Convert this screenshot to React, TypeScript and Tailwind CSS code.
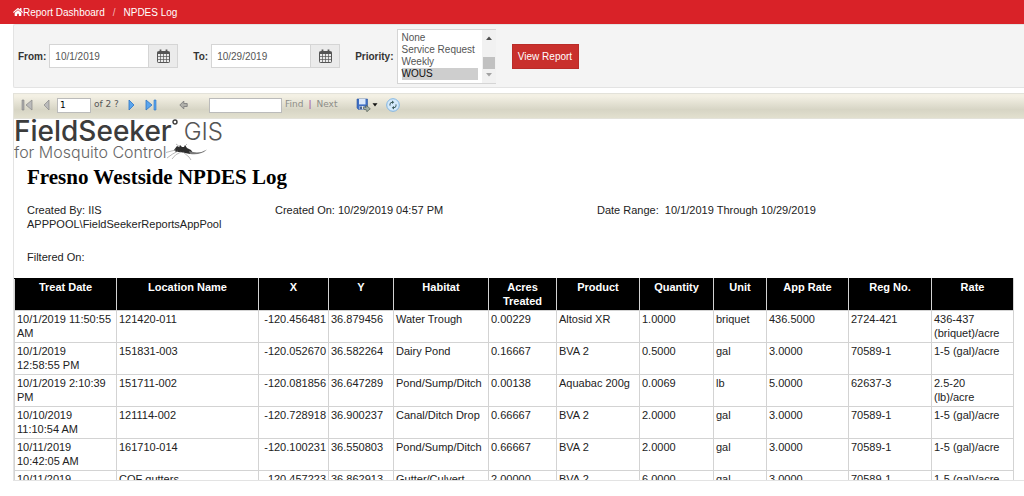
import React from 'react'
import { FaHome } from 'react-icons/fa'

interface Treatment {
    date: string
    location: string
    x: string
    y: string
    habitat: string
    acres: string
    product: string
    quantity: string
    unit: string
    appRate: string
    regNo: string
    rate: string
}

const columns = [
    { label: 'Treat Date', width: 'w-[102px]' },
    { label: 'Location Name', width: 'w-[142px]' },
    { label: 'X', width: 'w-[70px]' },
    { label: 'Y', width: 'w-[65px]' },
    { label: 'Habitat', width: 'w-[95px]' },
    { label: 'Acres Treated', width: 'w-[68px]' },
    { label: 'Product', width: 'w-[83px]' },
    { label: 'Quantity', width: 'w-[74px]' },
    { label: 'Unit', width: 'w-[53px]' },
    { label: 'App Rate', width: 'w-[82px]' },
    { label: 'Reg No.', width: 'w-[83px]' },
    { label: 'Rate', width: 'w-[82px]' },
]

const treatments: Treatment[] = [
    { date: '10/1/2019 11:50:55\nAM', location: '121420-011', x: '-120.456481', y: '36.879456', habitat: 'Water Trough', acres: '0.00229', product: 'Altosid XR', quantity: '1.0000', unit: 'briquet', appRate: '436.5000', regNo: '2724-421', rate: '436-437\n(briquet)/acre' },
    { date: '10/1/2019\n12:58:55 PM', location: '151831-003', x: '-120.052670', y: '36.582264', habitat: 'Dairy Pond', acres: '0.16667', product: 'BVA 2', quantity: '0.5000', unit: 'gal', appRate: '3.0000', regNo: '70589-1', rate: '1-5 (gal)/acre' },
    { date: '10/1/2019 2:10:39\nPM', location: '151711-002', x: '-120.081856', y: '36.647289', habitat: 'Pond/Sump/Ditch', acres: '0.00138', product: 'Aquabac 200g', quantity: '0.0069', unit: 'lb', appRate: '5.0000', regNo: '62637-3', rate: '2.5-20\n(lb)/acre' },
    { date: '10/10/2019\n11:10:54 AM', location: '121114-002', x: '-120.728918', y: '36.900237', habitat: 'Canal/Ditch Drop', acres: '0.66667', product: 'BVA 2', quantity: '2.0000', unit: 'gal', appRate: '3.0000', regNo: '70589-1', rate: '1-5 (gal)/acre' },
    { date: '10/11/2019\n10:42:05 AM', location: '161710-014', x: '-120.100231', y: '36.550803', habitat: 'Pond/Sump/Ditch', acres: '0.66667', product: 'BVA 2', quantity: '2.0000', unit: 'gal', appRate: '3.0000', regNo: '70589-1', rate: '1-5 (gal)/acre' },
    { date: '10/11/2019', location: 'COF gutters', x: '-120.457223', y: '36.862913', habitat: 'Gutter/Culvert', acres: '2.00000', product: 'BVA 2', quantity: '6.0000', unit: 'gal', appRate: '3.0000', regNo: '70589-1', rate: '1-5 (gal)/acre' },
]

const CalendarIcon = () => (
    <svg viewBox="0 0 13 14" className="w-[13px] h-[14px]" fill="none" stroke="#555" aria-hidden="true">
        <rect x="0.5" y="2.5" width="12" height="11" rx="0.8" />
        <path d="M0.5 3.5h12M0.5 4.5h12" />
        <path d="M3.5 5v8M6.5 5v8M9.5 5v8M1 7.5h11M1 10.5h11" strokeWidth="0.7" />
        <path d="M3.5 0.5v3M9.5 0.5v3" strokeWidth="1.8" />
    </svg>
)

const DateField: React.FC<{ id: string; label: string; value: string }> = ({ id, label, value }) => (
    <div className="flex items-center">
        <label htmlFor={id} className="font-bold text-[#333] mr-[3px]">{label}</label>
        <input id={id} type="text" defaultValue={value} className="w-[100px] h-6 px-[5px] border border-[#d5d5d5] bg-white text-[#555]" />
        <button type="button" aria-label={`Pick ${label}`} className="flex items-center justify-center w-[29px] h-6 border border-l-0 border-[#d5d5d5] bg-[#ebebeb]">
            <CalendarIcon />
        </button>
    </div>
)

const FilterBar = () => (
    <form className="flex items-center h-[64px] ml-[13px] pl-1 border border-r-0 border-[#e3e3e3] rounded-l-xs bg-[#f4f4f4] text-[10px]">
        <DateField id="from" label="From:" value="10/1/2019" />
        <div className="ml-[15px]">
            <DateField id="to" label="To:" value="10/29/2019" />
        </div>
        <label htmlFor="priority" className="ml-[15px] mr-[3px] font-bold text-[#333]">Priority:</label>
        <div className="flex w-[99px] h-[55px] border border-r-0 border-[#d5d5d5] bg-white">
            <select id="priority" multiple size={4} defaultValue={['WOUS']} className="flex-1 min-w-0 my-[2px] pl-1 pr-1 overflow-hidden text-[#555] leading-3 outline-none">
                {['None', 'Service Request', 'Weekly', 'WOUS'].map((name) => (
                    <option key={name} className="h-3 min-h-0 p-0 leading-3">{name}</option>
                ))}
            </select>
            <div className="flex flex-col items-center w-[14px] py-[6px] bg-[#f1f1f1]" aria-hidden="true">
                <svg viewBox="0 0 6 4" className="w-[6px] h-1"><path d="M0 4L3 0.5L6 4z" fill="#505050" /></svg>
                <div className="w-3 h-3 mt-auto mb-1 bg-[#c1c1c1]" />
                <svg viewBox="0 0 6 4" className="w-[6px] h-1"><path d="M0 0L3 3.5L6 0z" fill="#a3a3a3" /></svg>
            </div>
        </div>
        <button type="button" className="w-[67px] h-[25px] ml-4 border border-[#b92c28] bg-[#c9302c] text-white whitespace-nowrap">View Report</button>
    </form>
)

const ReportToolbar = () => (
    <div className="flex items-center shrink-0 h-[26px] mt-[5px] ml-[13px] pl-[7px] pb-[2px] border-y border-l border-[#e3e2da] bg-linear-to-b from-[#f3f0e4] from-10% via-[#d7d5c5] via-65% to-[#e2e0cf] font-['DejaVu_Sans',sans-serif] text-[9px] text-[#555]">
        <button type="button" aria-label="First page">
            <svg viewBox="0 0 12 12" className="w-3 h-3">
                <path d="M1 1h2v10h-2z" fill="#aaa" stroke="#888" strokeWidth="0.6" />
                <path d="M11 1v10L5 6z" fill="#bbb" stroke="#888" strokeWidth="0.7" />
            </svg>
        </button>
        <button type="button" aria-label="Previous page" className="ml-[10px]">
            <svg viewBox="0 0 7 12" className="w-[7px] h-3"><path d="M6 1v10L1 6z" fill="#bbb" stroke="#888" strokeWidth="0.7" /></svg>
        </button>
        <input type="text" aria-label="Current page" defaultValue="1" className="w-[34px] h-[15px] ml-[7px] px-[2px] border border-[#bbb] bg-white text-black" />
        <span className="w-[29px] ml-[3px] whitespace-nowrap">of 2 ?</span>
        <button type="button" aria-label="Next page" className="ml-[5px]">
            <svg viewBox="0 0 7 12" className="w-[7px] h-3"><path d="M1 1v10L6 6z" fill="#5aa5ee" stroke="#2c74c4" strokeWidth="0.8" /></svg>
        </button>
        <button type="button" aria-label="Last page" className="ml-[10px]">
            <svg viewBox="0 0 12 12" className="w-3 h-3">
                <path d="M1 1v10L7 6z" fill="#5aa5ee" stroke="#2c74c4" strokeWidth="0.8" />
                <path d="M9 1h2v10h-2z" fill="#5aa5ee" stroke="#2c74c4" strokeWidth="0.6" />
            </svg>
        </button>
        <button type="button" aria-label="Back to parent report" className="ml-[22px]">
            <svg viewBox="0 0 9 10" className="w-[9px] h-[10px]"><path d="M0.8 5L4.8 1v2.5h3.4v3h-3.4V9z" fill="#b0b0aa" stroke="#808080" strokeWidth="0.9" /></svg>
        </button>
        <input type="text" aria-label="Find text in report" className="w-[73px] h-[15px] ml-[21px] border border-[#bbb] bg-white" />
        <button type="button" className="ml-[3px] text-[#8d8d88]">Find</button>
        <span className="mx-[5px] text-[#a0409a]">|</span>
        <button type="button" className="text-[#8d8d88]">Next</button>
        <button type="button" aria-label="Export" className="flex items-center ml-[19px]">
            <svg viewBox="0 0 15 14" className="w-[15px] h-[14px]">
                <path d="M1 1h10.5v10.5H2.5L1 10z" fill="#3f6fc4" stroke="#2c549e" strokeWidth="0.6" />
                <path d="M3 1h6.5v5.4H3z" fill="#dbe8fa" />
                <path d="M3.5 8h5v3.5h-5z" fill="#dde4ef" />
                <path d="M4.2 8.6h1.6v2.6H4.2z" fill="#26417a" />
                <path d="M7.5 8.8l2.6 0.6V7.2l4.2 3.6-3.5 3v-1.6L7.5 11z" fill="#a5b0a5" stroke="#566056" strokeWidth="0.7" />
            </svg>
            <svg viewBox="0 0 6 4" className="w-[6px] h-1 ml-px"><path d="M0.5 0.3h5L3 3.6z" fill="#111" /></svg>
        </button>
        <button type="button" aria-label="Refresh" className="ml-2">
            <svg viewBox="0 0 14 14" className="w-[14px] h-[14px]" fill="none">
                <circle cx="7" cy="7" r="6.3" fill="#d5eafb" stroke="#7fb4e2" />
                <path d="M4 7.6V6.2Q4 4.3 6.3 4.3" stroke="#3b5a5a" />
                <path d="M6 2.6L8.2 4.3L6 6z" fill="#3b5a5a" />
                <path d="M10 6.4V7.8Q10 9.7 7.7 9.7" stroke="#3b5a5a" />
                <path d="M8 8L5.8 9.7L8 11.4z" fill="#3b5a5a" />
            </svg>
        </button>
    </div>
)

const Logo = () => (
    <div className="h-[42px] font-['Inter',sans-serif] text-[#3c3c3c] whitespace-nowrap">
        <div className="flex h-6 leading-6">
            <span className="text-[28px] font-medium">FieldSeeker</span>
            <svg viewBox="0 0 6 6" className="w-[6px] h-[6px]" aria-hidden="true"><circle cx="3" cy="3" r="2" fill="none" stroke="#3c3c3c" strokeWidth="1.4" /></svg>
            <span className="ml-[6px] pt-px text-[24px] font-light text-[#555]">GIS</span>
        </div>
        <div className="flex h-[18px] leading-[18px]">
            <span className="text-[16px] font-light text-[#666]">for Mosquito Control</span>
            <svg viewBox="0 0 42 18" className="w-[42px] h-[18px]" fill="none" aria-hidden="true">
                <path d="M8 7L11 3L13 4L14 2L16 4L18 4L19 2L21 5L25 7L27 10L24 11L19 10L14 9L10 9z" fill="#2e2e2e" />
                <path d="M23 8Q33 11.5 41 6.5Q35 12.5 24 11z" fill="#777" />
                <path d="M10 7Q5 8 0 9.5M12 8Q6 11 1 15M15 9Q9 11 6 16M17 9L23 14L25 17M14 4L10 1M19 3L21 1" stroke="#999" strokeWidth="0.7" />
            </svg>
        </div>
    </div>
)

const ReportTable = () => (
    <table className="table-fixed w-[999px] border-collapse leading-[14px]">
        <thead>
            <tr className="h-8 bg-black text-white">
                {columns.map(({ label, width }) => (
                    <th key={label} scope="col" className={`${width} px-3 pt-px pb-[2px] border border-[#d3d3d3] border-t-black align-top font-bold`}>
                        <span className={label === 'Acres Treated' ? '' : 'whitespace-nowrap'}>{label}</span>
                    </th>
                ))}
            </tr>
        </thead>
        <tbody>
            {treatments.map((row) => (
                <tr key={row.location} className="h-8">
                    {Object.entries(row).map(([key, value]) => (
                        <td key={key} className={`px-[2px] pt-px pb-[2px] border border-[#d3d3d3] align-top whitespace-pre ${key === 'x' ? 'text-right' : ''}`}>
                            {value}
                        </td>
                    ))}
                </tr>
            ))}
        </tbody>
    </table>
)

const App = () => {
    return (
        <div className="flex flex-col h-screen pb-[15px] overflow-hidden bg-white font-['Liberation_Sans',Arial,sans-serif]">
            <nav aria-label="Breadcrumb" className="flex items-center shrink-0 h-6 pl-[13px] bg-[#d92228] text-[10px] text-white">
                <a href="#dashboard" className="flex items-center">
                    <FaHome className="w-[10px] h-[10px]" />
                    Report Dashboard
                </a>
                <span className="mx-2 text-[#f3b3b5]">/</span>
                <a href="#npdes">NPDES Log</a>
            </nav>
            <FilterBar />
            <ReportToolbar />
            <main className="flex-1 min-h-0 ml-[13px] overflow-hidden border-l border-b border-[#e3e3e3] text-[11px] text-[#222]">
                <Logo />
                <h1 className="pl-[13px] mt-1 font-['Liberation_Serif',serif] text-[21px] leading-6 font-bold text-black">Fresno Westside NPDES Log</h1>
                <div className="grid grid-cols-[248px_322px_1fr] mt-[14px] pl-[13px] leading-[14px]">
                    <p>Created By: IIS<br />APPPOOL\FieldSeekerReportsAppPool</p>
                    <p>Created On: 10/29/2019 04:57 PM</p>
                    <p>Date Range: &nbsp;10/1/2019 Through 10/29/2019</p>
                </div>
                <p className="mt-[19px] mb-[14px] pl-[13px] leading-[14px]">Filtered On:</p>
                <ReportTable />
            </main>
        </div>
    )
}

export default App
